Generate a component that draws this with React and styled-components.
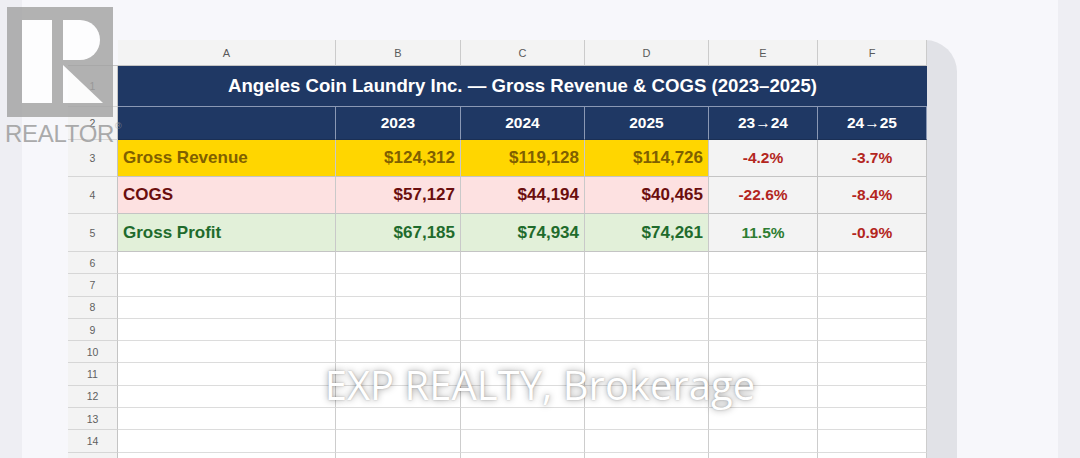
import React from 'react';
import styled, { createGlobalStyle } from 'styled-components';

const Global = createGlobalStyle`
  html, body { margin: 0; padding: 0; }
  body {
    width: 1080px;
    height: 458px;
    overflow: hidden;
    background: #f7f7fb;
    font-family: "Liberation Sans", Arial, sans-serif;
  }
`;

const Page = styled.div`
  position: relative;
  width: 1080px;
  height: 458px;
  overflow: hidden;
  display: flex;
`;

const SideStrip = styled.div`
  flex: none;
  width: 22px;
  background: #eeeef3;
`;

const Main = styled.div`
  flex: 1;
  box-sizing: border-box;
  padding: 40px 0 0 46px;
  background: #f7f7fb;
`;

const Card = styled.div`
  width: 889px;
  height: 100%;
  background: #e1e2e7;
  border-top-right-radius: 32px;
`;

const Sheet = styled.div`
  display: grid;
  width: 859px;
  grid-template-columns: 50px 218px 125px 124px 124px 109px 109px;
  grid-template-rows: 26px 41px 33px 37px 37px 38px;
  grid-auto-rows: 22.3px;
  font-family: "Liberation Sans", Arial, sans-serif;
`;

const Corner = styled.div`
  background: #f7f7fb;
  border-bottom: 1px solid #c4c4c4;
`;

const ColHead = styled.div`
  box-sizing: border-box;
  display: flex;
  align-items: center;
  justify-content: center;
  background: #f3f3f3;
  border-right: 1px solid #cbcbcb;
  border-bottom: 1px solid #c4c4c4;
  color: #5a5a5a;
  font-size: 11px;
`;

const RowHead = styled.div`
  box-sizing: border-box;
  display: flex;
  align-items: center;
  justify-content: center;
  background: #f3f3f3;
  border-right: 1px solid #c4c4c4;
  border-bottom: 1px solid #d6d6d6;
  color: #5f5f5f;
  font-size: 10.5px;
`;

const TitleCell = styled.div`
  grid-column: span 6;
  box-sizing: border-box;
  display: flex;
  align-items: center;
  justify-content: center;
  background: #1f3864;
  border-bottom: 1px solid #8a98b4;
  color: #ffffff;
  font-size: 18.6px;
  font-weight: 700;
  white-space: nowrap;
`;

const HeadCell = styled.div`
  box-sizing: border-box;
  display: flex;
  align-items: center;
  justify-content: center;
  background: #1f3864;
  border-right: 1px solid #8a98b4;
  border-bottom: 1px solid #1a2f55;
  color: #ffffff;
  font-size: 15.5px;
  font-weight: 700;
  white-space: nowrap;
`;

const tones = {
  revenue: { bg: '#ffd600', fg: '#7f6000' },
  cogs: { bg: '#fde1e1', fg: '#6b0e0e' },
  profit: { bg: '#e2f0d9', fg: '#1f6b2c' },
};

const LabelCell = styled.div`
  box-sizing: border-box;
  display: flex;
  align-items: center;
  padding: 0 0 0 5px;
  background: ${(p) => tones[p.$tone].bg};
  border-right: 1px solid #c9c9c9;
  border-bottom: 1px solid #c4c4c4;
  color: ${(p) => tones[p.$tone].fg};
  font-size: 17px;
  font-weight: 700;
  white-space: nowrap;
`;

const ValueCell = styled.div`
  box-sizing: border-box;
  display: flex;
  align-items: center;
  justify-content: flex-end;
  padding: 0 5px 0 0;
  background: ${(p) => tones[p.$tone].bg};
  border-right: 1px solid #c9c9c9;
  border-bottom: 1px solid #c4c4c4;
  color: ${(p) => tones[p.$tone].fg};
  font-size: 17px;
  font-weight: 700;
  white-space: nowrap;
`;

const ChangeCell = styled.div`
  box-sizing: border-box;
  display: flex;
  align-items: center;
  justify-content: center;
  background: #f3f3f3;
  border-right: 1px solid #c4c4c4;
  border-bottom: 1px solid #c4c4c4;
  color: ${(p) => (p.$dir === 'pos' ? '#2e7d32' : '#b3261e')};
  font-size: 15.5px;
  font-weight: 700;
  white-space: nowrap;
`;

const EmptyCell = styled.div`
  box-sizing: border-box;
  background: #ffffff;
  border-right: 1px solid #cdcdcd;
  border-bottom: 1px solid #dcdcdc;
`;

const Logo = styled.div`
  position: absolute;
  left: 5px;
  top: 7px;
  width: 120px;
  opacity: 0.82;
  pointer-events: none;
`;

const LogoMark = styled.svg`
  display: block;
  margin-left: 2px;
  width: 106px;
  height: 110px;
`;

const LogoWord = styled.div`
  margin-top: 5px;
  font-family: "Liberation Sans", Arial, sans-serif;
  font-size: 24px;
  line-height: 24px;
  color: #9a9a9a;
  white-space: nowrap;
  letter-spacing: -0.3px;
  & sup {
    font-size: 9px;
    vertical-align: 0;
    position: relative;
    top: -13px;
    margin-left: 1px;
  }
`;

const Watermark = styled.div`
  position: absolute;
  left: 0;
  right: 0;
  top: 365px;
  text-align: center;
  font-family: "Open Sans", "DejaVu Sans", sans-serif;
  font-size: 40px;
  line-height: 40px;
  color: #ffffff;
  text-shadow: 0 0 7px rgba(0, 0, 0, 0.4), 0 0 2px rgba(0, 0, 0, 0.25);
  white-space: nowrap;
  pointer-events: none;
`;

const columns = ['A', 'B', 'C', 'D', 'E', 'F'];
const years = ['', '2023', '2024', '2025', '23→24', '24→25'];

const rows = [
  {
    label: 'Gross Revenue',
    tone: 'revenue',
    values: ['$124,312', '$119,128', '$114,726'],
    changes: [['-4.2%', 'neg'], ['-3.7%', 'neg']],
  },
  {
    label: 'COGS',
    tone: 'cogs',
    values: ['$57,127', '$44,194', '$40,465'],
    changes: [['-22.6%', 'neg'], ['-8.4%', 'neg']],
  },
  {
    label: 'Gross Profit',
    tone: 'profit',
    values: ['$67,185', '$74,934', '$74,261'],
    changes: [['11.5%', 'pos'], ['-0.9%', 'neg']],
  },
];

const emptyRows = [6, 7, 8, 9, 10, 11, 12, 13, 14, ''];

export default function App() {
  return (
    <>
      <Global />
      <Page>
        <SideStrip />
        <Main>
          <Card>
            <Sheet>
              <Corner />
              {columns.map((c) => (
                <ColHead key={c}>{c}</ColHead>
              ))}

              <RowHead>1</RowHead>
              <TitleCell>Angeles Coin Laundry Inc. — Gross Revenue &amp; COGS (2023–2025)</TitleCell>

              <RowHead>2</RowHead>
              {years.map((y, i) => (
                <HeadCell key={i}>{y}</HeadCell>
              ))}

              {rows.map((r, i) => (
                <React.Fragment key={r.label}>
                  <RowHead>{i + 3}</RowHead>
                  <LabelCell $tone={r.tone}>{r.label}</LabelCell>
                  {r.values.map((v) => (
                    <ValueCell key={v} $tone={r.tone}>{v}</ValueCell>
                  ))}
                  {r.changes.map(([v, d], j) => (
                    <ChangeCell key={j} $dir={d}>{v}</ChangeCell>
                  ))}
                </React.Fragment>
              ))}

              {emptyRows.map((n, i) => (
                <React.Fragment key={i}>
                  <RowHead>{n}</RowHead>
                  {columns.map((c) => (
                    <EmptyCell key={c} />
                  ))}
                </React.Fragment>
              ))}
            </Sheet>
          </Card>
        </Main>
        <SideStrip />

        <Logo>
          <LogoMark viewBox="0 0 106 110">
            <rect x="0" y="0" width="106" height="110" fill="#a3a3a3" />
            <rect x="15" y="13" width="30" height="83" fill="#ffffff" />
            <path d="M56 13 H73 A20 20 0 0 1 73 53 H56 Z" fill="#ffffff" />
            <path d="M56 58 L56 96 L96 96 Z" fill="#ffffff" />
          </LogoMark>
          <LogoWord>
            REALTOR<sup>®</sup>
          </LogoWord>
        </Logo>

        <Watermark>EXP REALTY, Brokerage</Watermark>
      </Page>
    </>
  );
}
